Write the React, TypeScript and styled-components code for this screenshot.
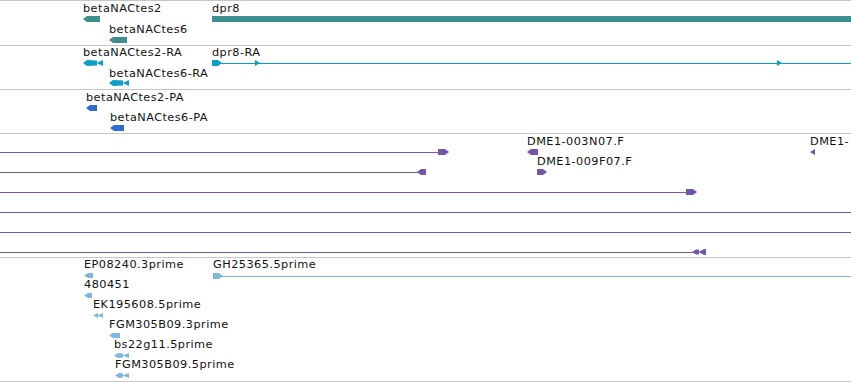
import React from "react";
import styled, { createGlobalStyle } from "styled-components";

const GlobalStyle = createGlobalStyle`
  html, body { margin: 0; padding: 0; background: #ffffff; }
  body { font-family: "DejaVu Sans", "Liberation Sans", sans-serif; }
`;

const Browser = styled.div`
  display: flex;
  flex-direction: column;
  width: 851px;
  border-top: 1px solid #c6c6c6;
  background: #ffffff;
`;

const Track = styled.section<{ $h: number }>`
  position: relative;
  height: ${(p) => p.$h}px;
  border-bottom: 1px solid #c6c6c6;
  overflow: hidden;
`;

const Label = styled.span<{ $x: number; $y: number }>`
  position: absolute;
  left: ${(p) => p.$x}px;
  top: ${(p) => p.$y}px;
  font-family: "DejaVu Sans", "Liberation Sans", sans-serif;
  font-size: 11.3px;
  letter-spacing: 0.45px;
  line-height: 12px;
  color: #111111;
  white-space: nowrap;
`;

const Span = styled.div<{ $x: number; $y: number; $w: number; $c: string }>`
  position: absolute;
  left: ${(p) => p.$x}px;
  top: ${(p) => p.$y}px;
  width: ${(p) => p.$w}px;
  height: 1px;
  background: ${(p) => p.$c};
`;

const GlyphSvg = styled.svg<{ $x: number; $y: number }>`
  position: absolute;
  left: ${(p) => p.$x}px;
  top: ${(p) => p.$y}px;
  display: block;
  overflow: visible;
`;

type Kind = "left" | "right" | "box" | "fish" | "dbl" | "tri" | "triL" | "barDbl";

function shapes(kind: Kind, w: number, h: number): string[] {
  const m = h / 2;
  const t = Math.min(4, w / 2);
  switch (kind) {
    case "left":
      return [`0,${m} ${t},0 ${w},0 ${w},${h} ${t},${h}`];
    case "right":
      return [`0,0 ${w - t},0 ${w},${m} ${w - t},${h} 0,${h}`];
    case "box":
      return [`0,0 ${w},0 ${w},${h} 0,${h}`];
    case "fish": {
      const b = w - 6;
      return [
        `0,${m} ${t},0 ${b},0.6 ${b},${h - 0.6} ${t},${h}`,
        `${b - 0.5},${m} ${w},0 ${w},${h}`,
      ];
    }
    case "dbl":
      return [`0,${m} ${w / 2},0 ${w / 2},${h}`, `${w / 2 - 0.5},${m} ${w},0 ${w},${h}`];
    case "tri":
      return [`0,0 ${w},${m} 0,${h}`];
    case "triL":
      return [`0,${m} ${w},0 ${w},${h}`];
    case "barDbl": {
      const b = w - 7;
      return [
        `0,${m} ${t},0.5 ${b},0.5 ${b},${h - 0.5} ${t},${h - 0.5}`,
        `${b - 0.5},${m} ${w - 2},0 ${w - 2},${h}`,
        `${w - 2},0 ${w},0 ${w},${h} ${w - 2},${h}`,
      ];
    }
  }
}

type G = { x: number; y: number; w: number; h?: number; kind: Kind };

function Glyph({ g, color }: { g: G; color: string }) {
  const h = g.h ?? 6;
  return (
    <GlyphSvg $x={g.x} $y={g.y} width={g.w} height={h} viewBox={`0 0 ${g.w} ${h}`}>
      {shapes(g.kind, g.w, h).map((p, i) => (
        <polygon key={i} points={p} fill={color} />
      ))}
    </GlyphSvg>
  );
}

type Feature = {
  label?: string;
  lx?: number;
  ly?: number;
  glyphs?: G[];
  spans?: { x: number; y: number; w: number }[];
};

type TrackDef = { h: number; color: string; features: Feature[] };

const TEAL = "#3f8e8e";
const CYAN = "#0d9fc2";
const BLUE = "#2e6cd0";
const PURPLE = "#7355aa";
const LIGHT = "#80b6dd";

const tracks: TrackDef[] = [
  {
    h: 44,
    color: TEAL,
    features: [
      { label: "betaNACtes2", lx: 83, ly: 2, glyphs: [{ x: 83, y: 15, w: 17, kind: "left" }] },
      { label: "betaNACtes6", lx: 109, ly: 23, glyphs: [{ x: 109, y: 36, w: 18, kind: "left" }] },
      { label: "dpr8", lx: 212, ly: 2, glyphs: [{ x: 212, y: 15, w: 639, kind: "box" }] },
    ],
  },
  {
    h: 43,
    color: CYAN,
    features: [
      { label: "betaNACtes2-RA", lx: 83, ly: 1, glyphs: [{ x: 83, y: 14, w: 20, kind: "fish" }] },
      { label: "betaNACtes6-RA", lx: 109, ly: 22, glyphs: [{ x: 109, y: 34, w: 20, kind: "fish" }] },
      {
        label: "dpr8-RA",
        lx: 212,
        ly: 1,
        spans: [{ x: 212, y: 17, w: 639 }],
        glyphs: [
          { x: 212, y: 14, w: 10, kind: "right" },
          { x: 255, y: 14, w: 5, kind: "tri" },
          { x: 777, y: 14, w: 5, kind: "tri" },
        ],
      },
    ],
  },
  {
    h: 43,
    color: BLUE,
    features: [
      { label: "betaNACtes2-PA", lx: 86, ly: 2, glyphs: [{ x: 86, y: 15, w: 11, kind: "left" }] },
      { label: "betaNACtes6-PA", lx: 110, ly: 22, glyphs: [{ x: 110, y: 35, w: 14, kind: "left" }] },
    ],
  },
  {
    h: 123,
    color: PURPLE,
    features: [
      { spans: [{ x: 0, y: 18, w: 440 }], glyphs: [{ x: 438, y: 15, w: 11, kind: "right" }] },
      { spans: [{ x: 0, y: 38, w: 420 }], glyphs: [{ x: 417, y: 35, w: 9, kind: "left" }] },
      { spans: [{ x: 0, y: 58, w: 688 }], glyphs: [{ x: 686, y: 55, w: 11, kind: "right" }] },
      { spans: [{ x: 0, y: 78, w: 851 }] },
      { spans: [{ x: 0, y: 98, w: 851 }] },
      { spans: [{ x: 0, y: 118, w: 694 }], glyphs: [{ x: 692, y: 115, w: 14, kind: "barDbl" }] },
      { label: "DME1-003N07.F", lx: 527, ly: 2, glyphs: [{ x: 527, y: 15, w: 11, kind: "left" }] },
      { label: "DME1-009F07.F", lx: 537, ly: 22, glyphs: [{ x: 537, y: 35, w: 10, kind: "right" }] },
      { label: "DME1-", lx: 810, ly: 2, glyphs: [{ x: 810, y: 15, w: 5, kind: "triL" }] },
    ],
  },
  {
    h: 123,
    color: LIGHT,
    features: [
      { label: "EP08240.3prime", lx: 84, ly: 1, glyphs: [{ x: 84, y: 15, w: 9, h: 5, kind: "left" }] },
      {
        label: "GH25365.5prime",
        lx: 213,
        ly: 1,
        spans: [{ x: 213, y: 18, w: 638 }],
        glyphs: [{ x: 213, y: 15, w: 10, h: 6, kind: "right" }],
      },
      { label: "480451", lx: 84, ly: 21, glyphs: [{ x: 84, y: 35, w: 8, h: 5, kind: "left" }] },
      { label: "EK195608.5prime", lx: 93, ly: 41, glyphs: [{ x: 93, y: 55, w: 10, h: 5, kind: "dbl" }] },
      { label: "FGM305B09.3prime", lx: 109, ly: 61, glyphs: [{ x: 109, y: 75, w: 11, h: 5, kind: "left" }] },
      { label: "bs22g11.5prime", lx: 114, ly: 81, glyphs: [{ x: 114, y: 95, w: 15, h: 5, kind: "fish" }] },
      { label: "FGM305B09.5prime", lx: 115, ly: 101, glyphs: [{ x: 115, y: 115, w: 14, h: 5, kind: "fish" }] },
    ],
  },
];

export default function App() {
  return (
    <>
      <GlobalStyle />
      <Browser>
        {tracks.map((t, ti) => (
          <Track key={ti} $h={t.h}>
            {t.features.map((f, fi) => (
              <React.Fragment key={fi}>
                {f.spans?.map((s, si) => (
                  <Span key={`s${si}`} $x={s.x} $y={s.y} $w={s.w} $c={t.color} />
                ))}
                {f.glyphs?.map((g, gi) => (
                  <Glyph key={`g${gi}`} g={g} color={t.color} />
                ))}
                {f.label && (
                  <Label $x={f.lx ?? 0} $y={f.ly ?? 0}>
                    {f.label}
                  </Label>
                )}
              </React.Fragment>
            ))}
          </Track>
        ))}
      </Browser>
    </>
  );
}
